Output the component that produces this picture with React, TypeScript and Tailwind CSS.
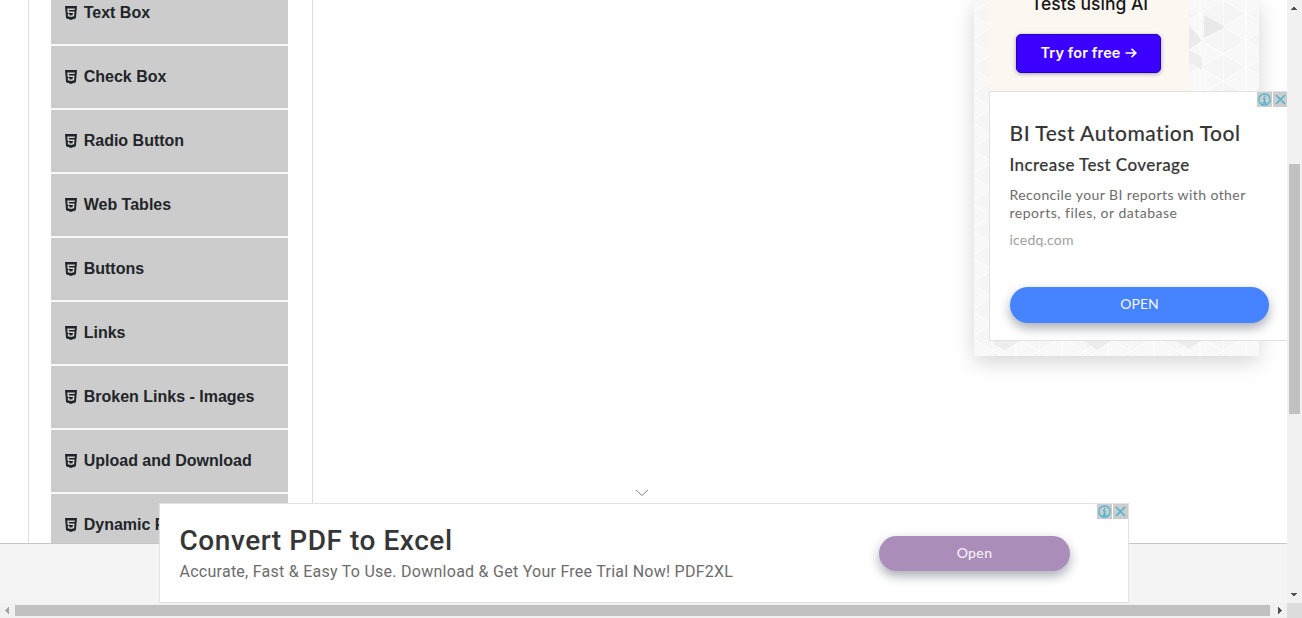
import { FaHtml5 } from "react-icons/fa";

const items = [
  "Text Box",
  "Check Box",
  "Radio Button",
  "Web Tables",
  "Buttons",
  "Links",
  "Broken Links - Images",
  "Upload and Download",
  "Dynamic Properties",
];

function AdChoices() {
  return (
    <div className="flex gap-px">
      <svg className="block h-[15px] w-[15px] bg-[#cccccc]" viewBox="0 0 15 15" fill="none" stroke="#3fb5d3">
        <circle cx="7.5" cy="7.5" r="5.7" strokeWidth="1.2" />
        <path d="M7.5 3.4v1.6M6 6.5h1.5v4.2M5.8 11h3.6" strokeWidth="1.4" />
      </svg>
      <svg className="block h-[15px] w-[15px] bg-[#cccccc]" viewBox="0 0 15 15" fill="none" stroke="#3fb5d3" strokeWidth="1.4">
        <path d="M3 3l9 9M12 3l-9 9" />
      </svg>
    </div>
  );
}

function Sidebar() {
  return (
    <nav className="ml-7 w-[285px] shrink-0 overflow-hidden border-x border-[#dcdcdc] pl-[22px]">
      <ul className="-mt-[18px] flex w-[237px] flex-col gap-0.5 bg-[#f8f8f8]">
        {items.map((item) => (
          <li key={item} className="flex h-[62px] items-center bg-[#cccccc] pl-3.5 text-base leading-6 font-bold text-[#212529]">
            <FaHtml5 className="h-[14px] w-3 shrink-0" preserveAspectRatio="none" viewBox="0 32 384 448" />
            <span className="ml-[6.7px] whitespace-nowrap">{item}</span>
          </li>
        ))}
      </ul>
    </nav>
  );
}

function TriangleBackdrop() {
  return (
    <svg className="block h-[356px] w-[285px]" viewBox="0 0 285 356">
      <defs>
        <pattern id="tri" width="46" height="27" patternUnits="userSpaceOnUse" x="19" y="0">
          <rect width="46" height="27" fill="#f8f8f8" />
          <path d="M0 0L23 13.5L0 27Z" fill="#f5f5f5" />
          <path d="M23 13.5L46 0V27Z" fill="#f6f6f6" />
          <path d="M0 0L46 27M46 0L0 27M0 0V27M23 0V27" stroke="#ffffff" strokeWidth="1" />
        </pattern>
      </defs>
      <rect width="285" height="356" fill="url(#tri)" />
      <path d="M230 15L251 27L230 38Z" fill="#e9e9e9" />
      <path d="M215 25L228 41L215 49Z" fill="#ebebeb" />
      <path d="M215 50L228 57V70L215 62Z" fill="#eeeeee" />
      <path d="M20 341H45L31 350L20 344ZM110 341H137L123 350ZM202 341H227L215 349Z" fill="#ededed" />
    </svg>
  );
}

export default function App() {
  return (
    <div className="grid h-[618px] w-[1302px] grid-cols-[1287px_15px] grid-rows-[603px_15px] overflow-hidden bg-white font-['Liberation_Sans',Arial,sans-serif]">
      <main className="relative flex flex-col overflow-hidden bg-white">
        <div className="flex h-[544px] shrink-0 overflow-hidden border-b border-[#c6c6c6]">
          <Sidebar />
          <div className="flex-1" />
          <aside className="relative mr-7 h-[356px] w-[285px] shadow-[0_6px_20px_rgba(0,0,0,0.17)]">
            <TriangleBackdrop />
            <div className="absolute top-0 left-[15px] flex h-[92px] w-[200px] flex-col items-center bg-[#fcf8f1] font-['Inter',sans-serif]">
              <div className="-mt-[7px] ml-px h-[22px] text-[17.5px] leading-[22px] font-medium whitespace-nowrap text-[#16161a]">Tests using AI</div>
              <div className="mt-[19px] -ml-px flex h-[39px] w-[145px] items-center justify-center gap-1 rounded-[5px] border border-[#2500bd] bg-[#3b00ff] pb-px text-[14.5px] font-semibold tracking-[0.12px] whitespace-nowrap text-white shadow-[0_1px_4px_rgba(30,20,90,0.4)]">
                Try for free
                <svg className="h-3 w-3" viewBox="0 0 12 12" fill="none" stroke="white" strokeWidth="1.7">
                  <path d="M0.5 6h10M6.5 1.8L10.8 6L6.5 10.2" />
                </svg>
              </div>
            </div>
          </aside>
        </div>
        <footer className="flex-1 bg-[#f4f4f4]" />

        <section className="absolute top-[91px] left-[989px] flex h-[250px] w-[300px] flex-col border border-[#e2e2e2] bg-white pl-[19.5px] font-['Lato',sans-serif]">
          <div className="absolute top-0 right-0">
            <AdChoices />
          </div>
          <h2 className="mt-[27px] h-[27px] text-[21px] leading-[27px] font-medium tracking-[0.5px] whitespace-nowrap text-[#363636] [-webkit-text-stroke:0.1px_#363636]">BI Test Automation Tool</h2>
          <h3 className="mt-[8px] h-[22px] text-[17px] leading-[22px] font-medium tracking-[0.4px] whitespace-nowrap text-[#363636] [-webkit-text-stroke:0.15px_#363636]">Increase Test Coverage</h3>
          <p className="mt-[10px] h-9 text-[14px] leading-[18px] tracking-[0.42px] whitespace-nowrap text-[#6c6c6c]">
            Reconcile your BI reports with other
            <br />
            <span className="tracking-[0.52px]">reports, files, or database</span>
          </p>
          <p className="mt-[9px] h-[18px] text-[14px] leading-[18px] tracking-[0.2px] whitespace-nowrap text-[#a0a0a0]">icedq.com</p>
          <button className="mt-[38px] ml-[0.5px] h-9 w-[259px] rounded-full bg-[#4683ff] pb-[3px] text-[14px] text-[#f4f7ff] shadow-[0_5px_11px_rgba(20,25,50,0.36)]">OPEN</button>
        </section>

        <svg className="absolute top-[489px] left-[635px] h-2 w-[14px]" viewBox="0 0 14 8" fill="none" stroke="#858585">
          <path d="M1 1l6 5.5L13 1" />
        </svg>
        <section className="absolute top-[503px] left-[159px] flex h-[100px] w-[970px] justify-between border border-[#e2e2e2] bg-white pl-[19.5px]">
          <div className="absolute top-0 right-0">
            <AdChoices />
          </div>
          <div className="font-['Roboto',sans-serif] whitespace-nowrap">
            <h2 className="mt-[21px] h-8 text-[28px] leading-8 font-medium tracking-[0.55px] text-[#363636]">Convert PDF to Excel</h2>
            <p className="mt-[4px] text-[16px] leading-[22px] tracking-[0.26px] text-[#6c6c6c]">Accurate, Fast &amp; Easy To Use. Download &amp; Get Your Free Trial Now! PDF2XL</p>
          </div>
          <button className="mt-8 mr-[58px] h-[35px] w-[191px] rounded-full bg-[#ab8dba] pb-0.5 font-['Lato',sans-serif] text-[14px] tracking-[0.4px] text-[#fcf8ff] shadow-[0_5px_11px_rgba(20,25,50,0.36)]">Open</button>
        </section>
      </main>

      <div className="flex flex-col bg-[#f1f1f1]">
        <svg className="block h-[15px] w-[15px] shrink-0" viewBox="0 0 15 15" fill="#505050" shapeRendering="crispEdges">
          <path d="M3.5 10h7L7 6z" />
        </svg>
        <div className="mt-[149px] ml-0.5 h-[250px] w-[11px] bg-[#c1c1c1]" />
        <svg className="mt-auto block h-[15px] w-[15px] shrink-0" viewBox="0 0 15 15" fill="#505050" shapeRendering="crispEdges">
          <path d="M3.5 5h7L7 9z" />
        </svg>
      </div>
      <div className="flex items-center bg-[#f1f1f1]">
        <svg className="block h-[15px] w-[15px] shrink-0" viewBox="0 0 15 15" fill="#a3a3a3" shapeRendering="crispEdges">
          <path d="M9 4v7L5 7.5z" />
        </svg>
        <div className="h-[11px] w-[1255px] bg-[#c1c1c1]" />
        <svg className="ml-auto block h-[15px] w-[15px] shrink-0" viewBox="0 0 15 15" fill="#505050" shapeRendering="crispEdges">
          <path d="M6 4v7l4-3.5z" />
        </svg>
      </div>
      <div className="bg-[#dcdcdc]" />
    </div>
  );
}
